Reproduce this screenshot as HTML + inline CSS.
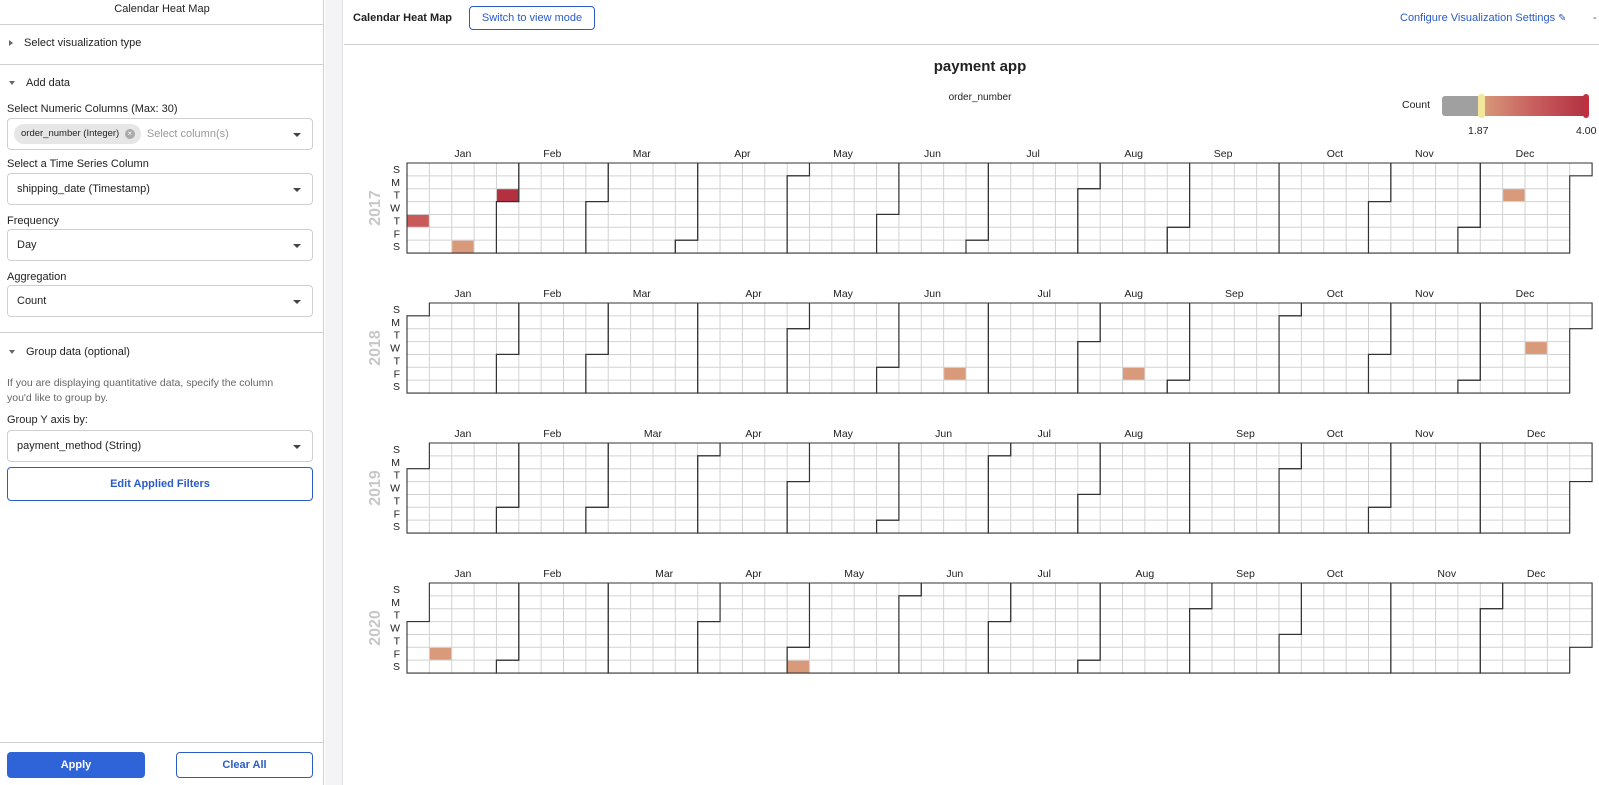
<!DOCTYPE html>
<html><head><meta charset="utf-8"><style>
*{box-sizing:border-box;margin:0;padding:0}
body{width:1599px;height:785px;overflow:hidden;background:#fff;font-family:"Liberation Sans",sans-serif;color:#222;position:relative}
.a{position:absolute}
.lp{left:0;top:0;width:324px;height:785px;border-right:1px solid #d0d0d0;background:#fff}
.strip{left:325px;top:0;width:18px;height:785px;background:#f4f4f6;border-right:1px solid #e2e2e2}
.hr{height:1px;background:#cfcfcf}
.t11{font-size:11px}
.sel{left:7px;width:306px;height:32px;border:1px solid #cfcfcf;border-radius:4px;font-size:11px;padding-left:9px;line-height:30px}
.sel:after{content:"";position:absolute;right:11px;top:14px;border-left:4px solid transparent;border-right:4px solid transparent;border-top:4px solid #444}
.tri{display:inline-block;border-left:3.5px solid transparent;border-right:3.5px solid transparent;border-top:4px solid #666;margin-right:11px;vertical-align:middle}
.btn{border:1px solid #2a5bc7;border-radius:4px;color:#2a5bc7;font-weight:bold;font-size:11px;text-align:center}
</style></head><body>
<div class="a lp">
 <div class="a t11" style="left:0;width:324px;top:3px;text-align:center">Calendar Heat Map</div>
 <div class="a hr" style="left:0;width:324px;top:24px"></div>
 <div class="a t11" style="left:9px;top:37px"><span style="display:inline-block;border-top:3.5px solid transparent;border-bottom:3.5px solid transparent;border-left:4px solid #666;margin-right:11px;vertical-align:middle"></span>Select visualization type</div>
 <div class="a hr" style="left:0;width:324px;top:64px"></div>
 <div class="a t11" style="left:9px;top:77px"><span class="tri"></span>Add data</div>
 <div class="a t11" style="left:7px;top:103px">Select Numeric Columns (Max: 30)</div>
 <div class="a sel" style="top:118px;padding-left:6px"><span style="display:inline-block;background:#e6e6e6;border-radius:10px;height:20px;line-height:20px;padding:0 6px 0 7px;font-size:9.5px;vertical-align:middle">order_number (Integer) <span style="display:inline-block;width:10px;height:10px;border-radius:5px;background:#aaa;color:#fff;font-size:8px;line-height:10px;text-align:center;margin-left:3px">×</span></span><span style="color:#999;margin-left:6px">Select column(s)</span></div>
 <div class="a t11" style="left:7px;top:158px">Select a Time Series Column</div>
 <div class="a sel" style="top:173px">shipping_date (Timestamp)</div>
 <div class="a t11" style="left:7px;top:215px">Frequency</div>
 <div class="a sel" style="top:229px">Day</div>
 <div class="a t11" style="left:7px;top:271px">Aggregation</div>
 <div class="a sel" style="top:285px">Count</div>
 <div class="a hr" style="left:0;width:324px;top:332px"></div>
 <div class="a t11" style="left:9px;top:346px"><span class="tri"></span>Group data (optional)</div>
 <div class="a" style="left:7px;top:376px;font-size:10.5px;color:#666;line-height:15px">If you are displaying quantitative data, specify the column<br>you'd like to group by.</div>
 <div class="a t11" style="left:7px;top:414px">Group Y axis by:</div>
 <div class="a sel" style="top:430px">payment_method (String)</div>
 <div class="a btn" style="left:7px;top:467px;width:306px;height:34px;line-height:32px">Edit Applied Filters</div>
 <div class="a hr" style="left:0;width:324px;top:742px"></div>
 <div class="a btn" style="left:7px;top:752px;width:138px;height:26px;line-height:24px;background:#2f63d8;border-color:#2f63d8;color:#fff">Apply</div>
 <div class="a btn" style="left:176px;top:752px;width:137px;height:26px;line-height:24px">Clear All</div>
</div>
<div class="a strip"></div>
<div class="a" style="left:353px;top:12px;font-size:11px;font-weight:bold">Calendar Heat Map</div>
<div class="a btn" style="left:469px;top:6px;width:126px;height:24px;line-height:22px;font-weight:normal;font-size:11px">Switch to view mode</div>
<div class="a" style="left:1400px;top:12px;font-size:11px;color:#2a5bc7">Configure Visualization Settings <span style="font-size:10px">&#x270E;</span></div>
<div class="a" style="left:1593px;top:12px;font-size:11px;color:#555">-</div>
<div class="a hr" style="left:344px;width:1255px;top:44px"></div>
<div class="a" style="left:880px;width:200px;top:58px;text-align:center;font-size:15px;font-weight:bold">payment app</div>
<div class="a" style="left:900px;width:160px;top:92px;text-align:center;font-size:10px">order_number</div>
<div class="a" style="left:1402px;top:99px;font-size:10.5px">Count</div>
<div class="a" style="left:1442px;top:96px;width:146px;height:20px;border-radius:3px;background:linear-gradient(90deg,#a0a0a0 0,#a0a0a0 37px,#d79a7a 40px,#c96060 90px,#b23040 146px)"></div>
<div class="a" style="left:1478px;top:94px;width:7px;height:24px;border-radius:3px;background:#f3e79c"></div>
<div class="a" style="left:1583px;top:94px;width:6px;height:24px;border-radius:3px;background:#c03040"></div>
<div class="a" style="left:1468px;top:125px;font-size:10.5px">1.87</div>
<div class="a" style="left:1576px;top:125px;font-size:10.5px">4.00</div>
<svg id="cal" class="a" style="left:0;top:0" width="1599" height="785" xmlns="http://www.w3.org/2000/svg"></svg>
<script>
var svg=document.getElementById('cal'),ns='http://www.w3.org/2000/svg';
var X0=407,CW=22.36,RH=12.86,M=['Jan','Feb','Mar','Apr','May','Jun','Jul','Aug','Sep','Oct','Nov','Dec'];
var col={'2017':[[0,4,'#c95a5a'],[2,6,'#d99a7c'],[4,2,'#b3303f'],[49,2,'#d99a7c']],'2018':[[24,5,'#d99a7c'],[32,5,'#d99a7c'],[50,3,'#d99a7c']],'2019':[],'2020':[[1,5,'#d99a7c'],[17,6,'#d99a7c']]};
function el(t,a,txt){var e=document.createElementNS(ns,t);for(var k in a)e.setAttribute(k,a[k]);if(txt)e.textContent=txt;svg.appendChild(e);return e;}
[2017,2018,2019,2020].forEach(function(y,yi){
 var Y0=163+140*yi,d0=new Date(y,0,1).getDay(),n=(y%4==0)?366:365,h='';
 for(var i=0;i<n;i++){var c=Math.floor((i+d0)/7),r=(i+d0)%7;h+='M'+(X0+c*CW)+' '+(Y0+r*RH)+'h'+CW+'v'+RH+'h'+(-CW)+'z';}
 el('path',{d:h,fill:'#fff',stroke:'#d2d2d2','stroke-width':1});
 col[y].forEach(function(p){el('rect',{x:X0+p[0]*CW+0.5,y:Y0+p[1]*RH+0.5,width:CW-1,height:RH-1,fill:p[2]});});
 for(var m=0;m<12;m++){
  var a=new Date(y,m,1),b=new Date(y,m+1,0);
  var ia=Math.round((a-new Date(y,0,1))/864e5),ib=Math.round((b-new Date(y,0,1))/864e5);
  var w0=Math.floor((ia+d0)/7),r0=(ia+d0)%7,w1=Math.floor((ib+d0)/7),r1=(ib+d0)%7;
  var p='M'+(X0+(w0+1)*CW)+' '+(Y0+r0*RH)+'H'+(X0+w0*CW)+'V'+(Y0+7*RH)+'H'+(X0+w1*CW)+'V'+(Y0+(r1+1)*RH)+'H'+(X0+(w1+1)*CW)+'V'+Y0+'H'+(X0+(w0+1)*CW)+'Z';
  el('path',{d:p,fill:'none',stroke:'#333','stroke-width':1.1});
  el('text',{x:X0+(w0+w1+1)/2*CW,y:Y0-6,'text-anchor':'middle','font-size':'10.5','font-family':'Liberation Sans, sans-serif',fill:'#222'},M[m]);
 }
 'SMTWTFS'.split('').forEach(function(d,r){el('text',{x:400,y:Y0+r*RH+10,'text-anchor':'end','font-size':'10.5','font-family':'Liberation Sans, sans-serif',fill:'#222'},d);});
 el('text',{x:0,y:0,transform:'translate(380,'+(Y0+45)+') rotate(-90)','text-anchor':'middle','font-size':'16','font-weight':'bold','font-family':'Liberation Sans, sans-serif',fill:'#c8c8c8'},y);
});
</script>
</body></html>
